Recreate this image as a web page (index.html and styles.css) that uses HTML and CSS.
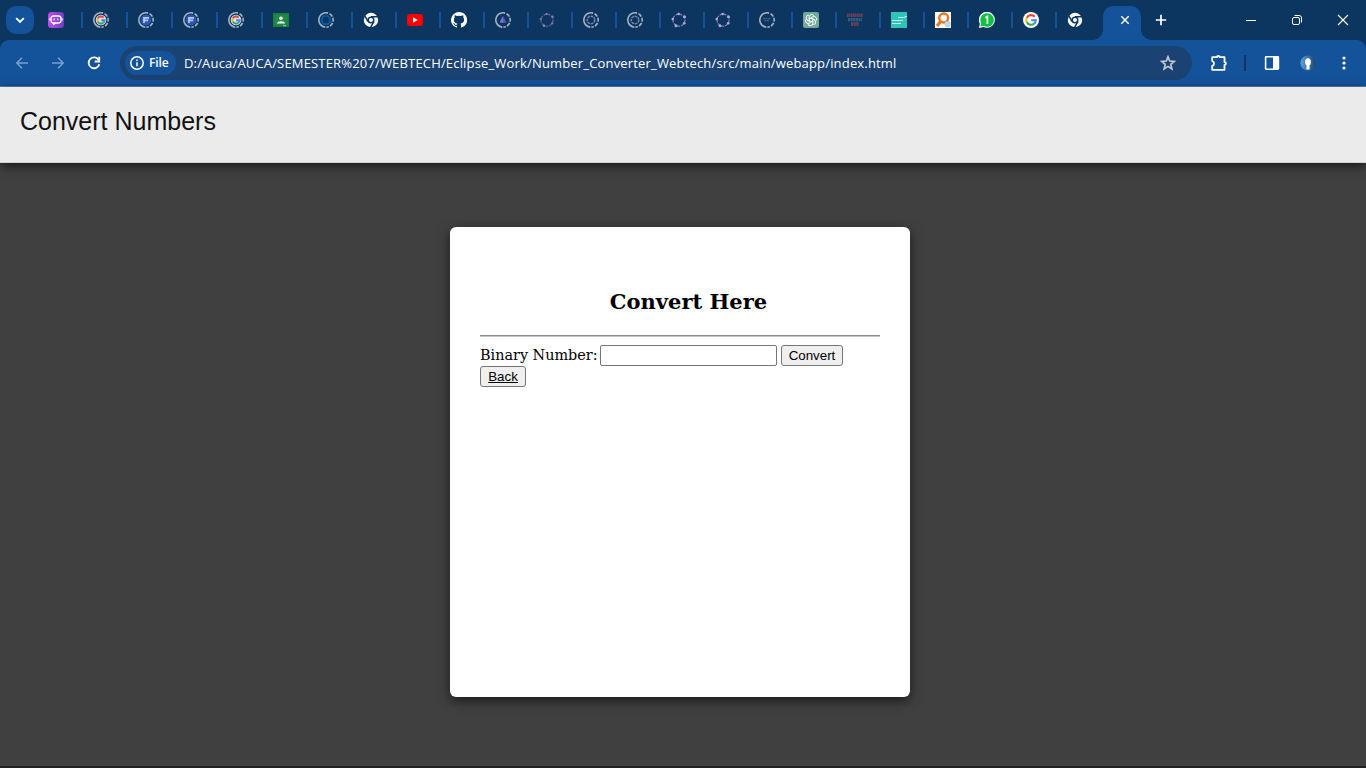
FILE: index.html
```html
<!DOCTYPE html>
<html lang="en">
<head>
<meta charset="utf-8">
<title>Convert Numbers</title>
<link rel="stylesheet" href="styles.css">
</head>
<body>
<svg class="defs" width="0" height="0" aria-hidden="true">
  <symbol id="ring" viewBox="0 0 16 16"><circle cx="8" cy="8" r="7.2" fill="none" stroke="#a3b2be" stroke-width="1.6" stroke-dasharray="24 1.5 4 1.3 4 1.3 4 1.3 2.5 1.3" transform="rotate(95 8 8)"/></symbol>
  <symbol id="g" viewBox="0 0 16 16"><circle cx="8" cy="8" r="8" fill="#fff"/><g fill="none" stroke-width="2.1"><path d="M11.7 4.8A4.8 4.8 0 0 0 3.8 5.7" stroke="#ea4335"/><path d="M3.8 5.7a4.8 4.8 0 0 0 0 4.6" stroke="#fbbc05"/><path d="M3.8 10.3a4.8 4.8 0 0 0 7.3 1.3" stroke="#34a853"/><path d="M11.1 11.6A4.8 4.8 0 0 0 12.8 8.2H8.2" stroke="#4285f4"/></g></symbol>
  <symbol id="loadg" viewBox="0 0 16 16"><use href="#ring"/><circle cx="8" cy="8" r="5.3" fill="#d8dfe5"/><g fill="none" stroke-width="1.9"><path d="M10.6 5.6A3.6 3.6 0 0 0 4.8 6.4" stroke="#dd4a40"/><path d="M4.8 6.4a3.6 3.6 0 0 0 0 3.2" stroke="#e6b52c"/><path d="M4.8 9.6a3.6 3.6 0 0 0 5.6 1" stroke="#3b9f5c"/><path d="M10.4 10.6A3.6 3.6 0 0 0 11.6 8.2H8.2" stroke="#4b83dc"/></g></symbol>
  <symbol id="loadf" viewBox="0 0 16 16"><use href="#ring"/><circle cx="8" cy="8" r="5.4" fill="#2c56b8"/><path d="M6 11V5.8h5M6 8.4h4.2" fill="none" stroke="#b9ccf2" stroke-width="1.7"/></symbol>
  <symbol id="chrome" viewBox="0 0 16 16"><circle cx="8" cy="8" r="7.2" fill="#fff"/><path d="M8 4.7h7M5.1 9.7 1.6 3.7M10.9 9.7l-3.5 6" stroke="#0c3560" stroke-width="1.5"/><circle cx="8" cy="8" r="2.8" fill="#fff" stroke="#0c3560" stroke-width="1.5"/></symbol>
  <symbol id="dots" viewBox="0 0 16 16"><circle cx="8" cy="8.2" r="6" fill="none" stroke="#8b7f8c" stroke-width="1.2" stroke-dasharray="3 1"/><g fill="#aea4ff"><circle cx="7.7" cy="2" r="1.3"/><circle cx="13.5" cy="4.8" r="1.5"/><circle cx="13.2" cy="11.3" r="1.3"/><circle cx="5" cy="13.7" r="1.5"/><circle cx="1.8" cy="7" r="1.3"/></g></symbol>
  <symbol id="faint" viewBox="0 0 16 16"><circle cx="8" cy="8.2" r="6" fill="none" stroke="#5b617a" stroke-width="1.4" stroke-dasharray="3 1"/><g fill="#8580cd"><circle cx="7.7" cy="2" r="1.1"/><circle cx="13.5" cy="4.8" r="1.2"/><circle cx="13.2" cy="11.3" r="1.1"/><circle cx="5" cy="13.7" r="1.2"/><circle cx="1.8" cy="7" r="1.1"/></g></symbol>
  <symbol id="loaddots" viewBox="0 0 16 16"><use href="#ring"/><circle cx="8" cy="8" r="3.8" fill="none" stroke="#7e86b0" stroke-width="1.4" stroke-dasharray="2.6 .8"/></symbol>
</svg>

<header class="browser">
  <div class="tabstrip">
    <button class="tab-search" aria-label="Search tabs"><svg width="16" height="16" viewBox="0 0 16 16"><path d="m4.2 6.1 3.8 3.8 3.8-3.8" fill="none" stroke="#fff" stroke-width="1.9"/></svg></button>
    <nav class="tabs">
      <span class="tab wide"><svg viewBox="0 0 16 16"><defs><linearGradient id="poe" x2="1" y2="0"><stop stop-color="#c64bf2"/><stop offset="1" stop-color="#6541c0"/></linearGradient></defs><rect width="16" height="16" rx="3.5" fill="url(#poe)"/><rect x="3" y="4" width="10" height="7" rx="2.4" fill="none" stroke="#fff" stroke-width="1.3"/><path d="M1.9 6.2v2.4M14.1 6.2v2.4M6.2 6.6v1.7M9.8 6.6v1.7" stroke="#fff" stroke-width="1.3"/><path d="M4.7 11h3.8L5.3 13.4z" fill="#fff"/></svg></span>
      <span class="tab wide"><svg><use href="#loadg"/></svg></span>
      <span class="tab wide"><svg><use href="#loadf"/></svg></span>
      <span class="tab wide"><svg><use href="#loadf"/></svg></span>
      <span class="tab wide"><svg><use href="#loadg"/></svg></span>
      <span class="tab wide"><svg viewBox="0 0 16 16"><path d="M0 1h16v14H0z" fill="#188038"/><path d="M1.5 2.5h13v11h-13z" fill="#1f8a48"/><circle cx="8" cy="6.3" r="1.8" fill="#fff"/><path d="M4 11.5c0-3 8-3 8 0z" fill="#fff"/><path d="M10 13h3v1.2h-3z" fill="#86bd91"/></svg></span>
      <span class="tab wide"><svg viewBox="0 0 16 16"><use href="#ring"/><circle cx="8" cy="8" r="4.2" fill="none" stroke="#0b59a8" stroke-width="2"/></svg></span>
      <span class="tab"><svg><use href="#chrome"/></svg></span>
      <span class="tab"><svg viewBox="0 0 16 16"><rect y="2" width="16" height="12" rx="3" fill="#f00"/><path d="M6 5.3v5.4L10.7 8z" fill="#fff"/></svg></span>
      <span class="tab"><svg viewBox="0 0 16 16"><path fill="#fff" d="M8 0a8 8 0 0 0-2.5 15.6c.4.1.5-.2.5-.4v-1.4c-2.2.5-2.7-1-2.7-1-.4-.9-.9-1.2-.9-1.2-.7-.5.1-.5.1-.5.8.1 1.2.8 1.2.8.7 1.3 1.9.9 2.3.7.1-.5.3-.9.5-1.1-1.8-.2-3.6-.9-3.6-4 0-.9.3-1.6.8-2.1-.1-.2-.4-1 .1-2.1 0 0 .7-.2 2.2.8a7.5 7.5 0 0 1 4 0c1.5-1 2.2-.8 2.2-.8.4 1.1.2 1.9.1 2.1.5.6.8 1.3.8 2.1 0 3.1-1.9 3.8-3.7 4 .3.3.6.8.6 1.5v2.2c0 .2.1.5.6.4A8 8 0 0 0 8 0z"/></svg></span>
      <span class="tab"><svg viewBox="0 0 16 16"><use href="#ring"/><path d="M8 4v7l-3.5-.8z" fill="#7d72df"/><path d="m8 4 3.4 6.4L8 11z" fill="#5d57b8"/></svg></span>
      <span class="tab"><svg><use href="#faint"/></svg></span>
      <span class="tab"><svg><use href="#loaddots"/></svg></span>
      <span class="tab"><svg><use href="#loaddots"/></svg></span>
      <span class="tab"><svg><use href="#dots"/></svg></span>
      <span class="tab"><svg><use href="#dots"/></svg></span>
      <span class="tab"><svg viewBox="0 0 16 16"><use href="#ring"/><path d="M4 6.7h8M5.5 8.7h5" stroke="#48617b" stroke-width="1.2" stroke-dasharray="2 .5"/></svg></span>
      <span class="tab"><svg viewBox="0 0 16 16"><rect width="16" height="16" rx="2" fill="#74a99a"/><g fill="none" stroke="#fff" stroke-width="1"><path id="petal" d="M6.2 9V4.8a2.6 2.6 0 0 1 4.7-1.2M6.2 6.9l3.6-2.1a2.6 2.6 0 0 1 3.4 3.7"/><use href="#petal" transform="rotate(120 8 8)"/><use href="#petal" transform="rotate(240 8 8)"/></g></svg></span>
      <span class="tab"><svg viewBox="0 0 16 16"><path d="M0 3.2h16" stroke="#6b3d57" stroke-width="3.4" stroke-dasharray="1.7 .3"/><path d="M1 7.6h14" stroke="#2a5f80" stroke-width="3.4" stroke-dasharray="2.2 .4"/><path d="M4 12h8" stroke="#6b3d57" stroke-width="4" stroke-dasharray="2.2 .4"/></svg></span>
      <span class="tab"><svg viewBox="0 0 16 16"><path d="M0 0h16v16H0z" fill="#2ec4b6"/><path d="M7 5.5h5.5L16 4.3M1 8.5h11M1 11.5h9" fill="none" stroke="#c9f3ee" stroke-width="1"/></svg></span>
      <span class="tab"><svg viewBox="0 0 16 16"><path d="M0 0h16v16H0z" fill="#fff"/><circle cx="8.7" cy="6" r="4.4" fill="none" stroke="#e47a21" stroke-width="2.5"/><path d="m6 9-4 5" stroke="#e47a21" stroke-width="3.2"/><circle cx="12.5" cy="12" r="3" fill="#9bc3df"/><path d="M10 11h5M10 13h5M12 9.5v5" stroke="#e1f1fb" stroke-width=".7"/></svg></span>
      <span class="tab"><svg viewBox="0 0 16 16"><path d="M0 16 .8 11.5A8 8 0 1 1 4.5 15z" fill="#fff"/><path d="m1.4 14.6.7-3.3A6.8 6.8 0 1 1 4.8 14z" fill="#12c144"/><path d="m6.4 5.8 2-1.2V12" fill="none" stroke="#fff" stroke-width="1.7"/></svg></span>
      <span class="tab"><svg><use href="#g"/></svg></span>
      <span class="tab last"><svg><use href="#chrome"/></svg></span>
      <span class="tab-active"><svg viewBox="0 0 16 16"><path d="m4.3 4.3 7.4 7.4m0-7.4-7.4 7.4" stroke="#fff" stroke-width="1.5"/></svg></span>
    </nav>
    <button class="new-tab" aria-label="New tab"><svg width="16" height="16" viewBox="0 0 16 16"><path d="M8 2.8v10.4M2.8 8h10.4" stroke="#fff" stroke-width="1.7"/></svg></button>
    <div class="window-controls">
      <svg viewBox="0 0 16 16"><path d="M3 8.5h10" stroke="#fff"/></svg>
      <svg viewBox="0 0 16 16"><path d="M5.5 3.5h4.6a2.4 2.4 0 0 1 2.4 2.4v4.6" fill="none" stroke="#fff"/><rect x="3.5" y="5.5" width="7" height="7" rx="1.5" fill="none" stroke="#fff"/></svg>
      <svg viewBox="0 0 16 16"><path d="m3 3 10 10M13 3 3 13" stroke="#fff" stroke-width="1.1"/></svg>
    </div>
  </div>
  <div class="toolbar">
    <div class="nav-buttons">
      <svg viewBox="0 0 16 16"><path d="M14 8H3M8 2.8 2.8 8 8 13.2" fill="none" stroke="#759fcf" stroke-width="1.5"/></svg>
      <svg viewBox="0 0 16 16"><path d="M2 8h11M8 2.8 13.2 8 8 13.2" fill="none" stroke="#759fcf" stroke-width="1.5"/></svg>
      <svg viewBox="0 0 16 16"><path d="M12.8 5.2A5.4 5.4 0 1 0 13.3 9.2" fill="none" stroke="#fff" stroke-width="1.8"/><path d="M13.2 1.8V6.5H8.7" fill="none" stroke="#fff" stroke-width="1.8"/></svg>
    </div>
    <div class="omnibox">
      <span class="chip"><svg width="16" height="16" viewBox="0 0 16 16"><circle cx="8" cy="8" r="6.2" fill="none" stroke="#fff" stroke-width="1.5"/><path d="M8 7.2v4M8 4.5v1.6" stroke="#fff" stroke-width="1.5"/></svg><span class="chip-text">File</span></span>
      <span class="url">D:/Auca/AUCA/SEMESTER%207/WEBTECH/Eclipse_Work/Number_Converter_Webtech/src/main/webapp/index.html</span>
      <svg class="star" viewBox="0 0 16 16"><path d="m8 1.8 1.7 4.3 4.6.3-3.5 3 1.1 4.5L8 11.4l-3.9 2.5 1.1-4.5-3.5-3 4.6-.3z" fill="none" stroke="#c9cdd3" stroke-width="1.6"/></svg>
    </div>
    <div class="actions">
      <svg class="puzzle" viewBox="0 0 18 18"><path d="M2.2 3.2h4.7c0-1.8 2.8-1.8 2.8 0h4.8v4.8c1.8 0 1.8 2.8 0 2.8v5h-12.3v-3.9c2.4-.5 2.4-4.3 0-4.8z" fill="none" stroke="#fff" stroke-width="1.8" stroke-linejoin="round"/></svg>
      <span class="divider"></span>
      <svg class="panel" viewBox="0 0 16 16"><rect x="1.6" y="1.8" width="12.8" height="12.4" rx=".6" fill="none" stroke="#fff" stroke-width="1.6"/><path d="M9 2h5v12H9z" fill="#fff"/></svg>
      <svg class="avatar" viewBox="0 0 16 16"><defs><linearGradient id="av"><stop stop-color="#5fa3dc"/><stop offset="1" stop-color="#1c4470"/></linearGradient></defs><circle cx="8" cy="8" r="7.6" fill="url(#av)"/><ellipse cx="8" cy="7" rx="2.9" ry="3.8" fill="#fff"/><path d="M6.7 9.5h2.8v5H6.3z" fill="#fff"/></svg>
      <svg class="menu" viewBox="0 0 16 16"><g fill="#fff"><circle cx="8" cy="3" r="1.6"/><circle cx="8" cy="8" r="1.6"/><circle cx="8" cy="13" r="1.6"/></g></svg>
    </div>
  </div>
</header>

<main class="page">
  <div class="banner"><span class="brand">Convert Numbers</span></div>
  <section class="card">
    <h2 class="title"><span>Convert Here</span></h2>
    <hr class="rule">
    <form class="form">
      <div class="row">
        <label class="label" for="num">Binary Number:</label>
        <input class="field" id="num" type="text">
        <button class="btn convert" type="button">Convert</button>
      </div>
      <button class="btn back" type="button">Back</button>
    </form>
  </section>
</main>
</body>
</html>
```
FILE: styles.css
```css
* { box-sizing: border-box; }

body {
  margin: 0;
  height: 768px;
  display: flex;
  flex-direction: column;
  overflow: hidden;
  background: #404040;
}

svg { display: block; flex: none; }
.defs { position: absolute; }
button { padding: 0; border: 0; }

/* Browser window */
.browser { background: #0c3560; flex: none; }
.tabstrip { display: flex; height: 40px; }
.tab-search {
  width: 28px;
  height: 28px;
  margin: 6px 4px 6px 6px;
  border-radius: 10px;
  background: #14539a;
  display: grid;
  place-items: center;
}
.tabs { display: flex; width: 1103px; }
.tab {
  width: 44px;
  flex: none;
  display: flex;
  align-items: center;
  justify-content: space-between;
  padding-left: 10px;
}
.tab.wide { width: 45px; }
.tab svg { width: 16px; height: 16px; }
.tab::after { content: ""; width: 2px; height: 16px; background: #14539a; }
.tab.last::after { visibility: hidden; }
.tab-active {
  position: relative;
  flex: none;
  width: 38px;
  height: 34px;
  margin: 6px 0 0 2px;
  padding: 6px 0 0 14px;
  border-radius: 10px 10px 0 0;
  background: #14539a;
}
.tab-active svg { width: 16px; height: 16px; }
.tab-active::before, .tab-active::after {
  content: "";
  position: absolute;
  bottom: 0;
  width: 10px;
  height: 10px;
}
.tab-active::before { left: -10px; background: radial-gradient(circle at 0 0, transparent 9.5px, #14539a 10px); }
.tab-active::after { right: -10px; background: radial-gradient(circle at 100% 0, transparent 9.5px, #14539a 10px); }
.new-tab { width: 16px; margin-left: 12px; background: none; }
.window-controls { display: flex; align-items: center; gap: 30px; margin-left: auto; padding-right: 15px; }
.window-controls svg { width: 16px; height: 16px; }

.toolbar {
  height: 47px;
  display: flex;
  align-items: flex-start;
  background: #14539a;
  border-bottom: 1px solid #5680ae;
  border-radius: 9px 9px 0 0;
}
.nav-buttons { display: flex; gap: 20px; padding: 15px 18px 0 14px; }
.nav-buttons svg { width: 16px; height: 16px; }
.omnibox {
  width: 1072px;
  height: 34px;
  margin-top: 6px;
  padding: 0 16px 0 5px;
  border-radius: 17px;
  background: #1a4373;
  display: flex;
  align-items: center;
  color: #fff;
  font: 13px/18px "Open Sans", "Noto Sans", sans-serif;
}
.chip {
  width: 51px;
  height: 24px;
  padding-left: 4px;
  border-radius: 12px;
  background: #14539a;
  display: flex;
  align-items: center;
  gap: 4px;
}
.chip-text { font-size: 12px; font-weight: 600; letter-spacing: -.1px; }
.url { margin-left: 8px; white-space: nowrap; letter-spacing: .17px; }
.star { width: 16px; height: 16px; margin-left: auto; }
.actions { display: flex; align-items: center; height: 46px; padding-left: 18px; }
.puzzle { width: 18px; height: 18px; }
.divider { width: 2px; height: 16px; margin: 0 18px 0 16px; background: #0c3560; }
.panel, .avatar, .menu { width: 16px; height: 16px; }
.avatar { margin: 0 20px; }

/* Page */
.page {
  flex: 1;
  display: flex;
  flex-direction: column;
  background: #404040;
  border-bottom: 2px solid #222;
}
.banner {
  height: 76px;
  padding: 19px 20px;
  background: #ebebeb;
  border-bottom: 1px solid #d0d4cf;
  box-shadow: 0 3px 10px rgba(0, 0, 0, .65);
}
.brand {
  font: 25px/30px "Liberation Sans", Arial, sans-serif;
  color: #111;
  white-space: nowrap;
}
.card {
  width: 460px;
  height: 470px;
  margin: 64px 0 0 450px;
  padding: 58px 30px 0;
  border-radius: 6px;
  background: #fff;
  box-shadow: 0 4px 12px rgba(0, 0, 0, .6);
  font: 14.4px/20px "DejaVu Serif", serif;
  color: #000;
}
.title {
  margin: 0;
  padding-left: 17px;
  font-size: 21px;
  line-height: 34px;
  text-align: center;
}
.rule { height: 2px; margin: 16px 0 8px; border: 0; border-top: 1px solid #8c8c8c; background: #c4c4c4; }
.row { display: flex; height: 21px; }
.label { width: 120px; white-space: nowrap; }
.field { width: 177px; height: 21px; border: 1px solid #767676; border-radius: 2px; }
.btn {
  height: 21px;
  border: 1px solid #767676;
  border-radius: 3px;
  background: #efefef;
  font: 13.33px/19px "Liberation Sans", Arial, sans-serif;
  color: #000;
}
.convert { width: 62px; margin-left: 4px; }
.back { display: block; width: 46px; text-decoration: underline; }
```
